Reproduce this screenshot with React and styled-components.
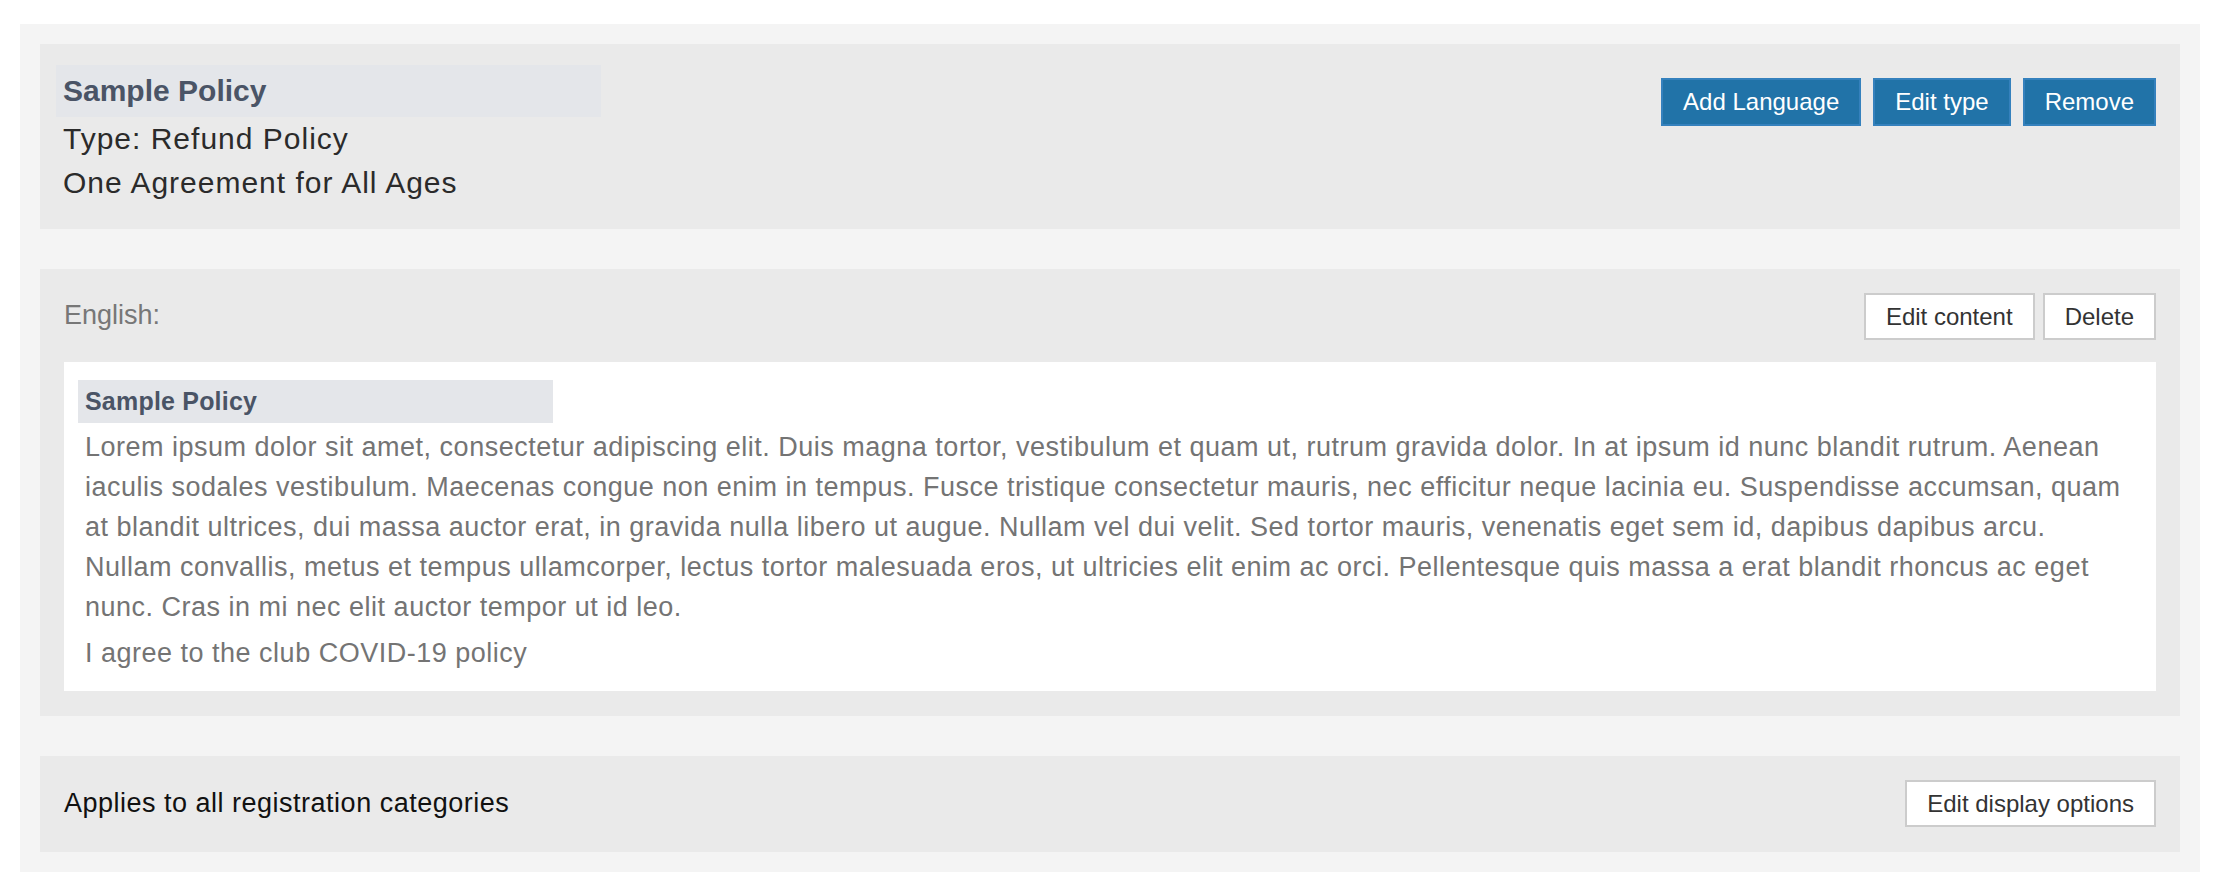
import React from "react";
import styled, { createGlobalStyle } from "styled-components";

const GlobalStyle = createGlobalStyle`
  html, body {
    margin: 0;
    padding: 0;
    background: #ffffff;
    font-family: "Liberation Sans", Arial, Helvetica, sans-serif;
  }
  * {
    box-sizing: border-box;
  }
`;

const Page = styled.div`
  margin: 24px 28px 18px 20px;
  padding: 20px;
  background: #f4f4f4;
  display: flex;
  flex-direction: column;
  gap: 40px;
`;

const Panel = styled.section`
  background: #eaeaea;
  padding: ${(p) => p.$pad || "24px"};
`;

const HeaderRow = styled.div`
  display: flex;
  justify-content: space-between;
  align-items: ${(p) => p.$align || "center"};
`;

const PolicyInfo = styled.div`
  display: flex;
  flex-direction: column;
`;

const TitleBar = styled.div`
  width: ${(p) => p.$width}px;
  height: ${(p) => p.$height}px;
  line-height: ${(p) => p.$height}px;
  margin: ${(p) => p.$margin || "0"};
  padding: 0 7px;
  background: #e4e6ea;
  color: #4a5466;
  font-weight: bold;
  font-size: ${(p) => p.$size}px;
  letter-spacing: ${(p) => p.$spacing || 0}px;
`;

const InfoLine = styled.div`
  padding-left: 7px;
  font-size: 30px;
  line-height: 44px;
  letter-spacing: 1px;
  color: #2b2b2b;
`;

const ButtonGroup = styled.div`
  display: flex;
  gap: ${(p) => p.$gap || 12}px;
  margin-top: ${(p) => p.$offset || 0}px;
`;

const PrimaryButton = styled.button`
  height: 48px;
  padding: 0 20px;
  border: 2px solid #3581bd;
  background: #2173a8;
  color: #ffffff;
  font-family: inherit;
  font-size: 24px;
  cursor: pointer;
`;

const SecondaryButton = styled.button`
  height: 47px;
  padding: 0 20px;
  border: 2px solid #cccccc;
  background: #ffffff;
  color: #333333;
  font-family: inherit;
  font-size: 24px;
  cursor: pointer;
`;

const LanguageLabel = styled.span`
  font-size: 27px;
  color: #777777;
  margin-top: -3px;
`;

const ContentCard = styled.div`
  margin-top: 22px;
  padding: 18px 20px 18px 21px;
  background: #ffffff;
`;

const BodyText = styled.p`
  margin: ${(p) => p.$margin || "0"};
  font-size: 27px;
  line-height: 40px;
  letter-spacing: 0.5px;
  color: #747474;
`;

const CategoryText = styled.span`
  font-size: 27px;
  letter-spacing: 0.5px;
  color: #111111;
`;

const lorem =
  "Lorem ipsum dolor sit amet, consectetur adipiscing elit. Duis magna tortor, vestibulum et quam ut, rutrum gravida dolor. In at ipsum id nunc blandit rutrum. Aenean iaculis sodales vestibulum. Maecenas congue non enim in tempus. Fusce tristique consectetur mauris, nec efficitur neque lacinia eu. Suspendisse accumsan, quam at blandit ultrices, dui massa auctor erat, in gravida nulla libero ut augue. Nullam vel dui velit. Sed tortor mauris, venenatis eget sem id, dapibus dapibus arcu. Nullam convallis, metus et tempus ullamcorper, lectus tortor malesuada eros, ut ultricies elit enim ac orci. Pellentesque quis massa a erat blandit rhoncus ac eget nunc. Cras in mi nec elit auctor tempor ut id leo.";

const App = () => {
  return (
    <>
      <GlobalStyle />
      <Page>
        <Panel $pad="21px 24px 24px 16px">
          <HeaderRow $align="flex-start">
            <PolicyInfo>
              <TitleBar $width={545} $height={52} $size={30}>
                Sample Policy
              </TitleBar>
              <InfoLine>Type: Refund Policy</InfoLine>
              <InfoLine>One Agreement for All Ages</InfoLine>
            </PolicyInfo>
            <ButtonGroup $offset={13}>
              <PrimaryButton>Add Language</PrimaryButton>
              <PrimaryButton>Edit type</PrimaryButton>
              <PrimaryButton>Remove</PrimaryButton>
            </ButtonGroup>
          </HeaderRow>
        </Panel>

        <Panel $pad="24px 24px 25px 24px">
          <HeaderRow>
            <LanguageLabel>English:</LanguageLabel>
            <ButtonGroup $gap={8}>
              <SecondaryButton>Edit content</SecondaryButton>
              <SecondaryButton>Delete</SecondaryButton>
            </ButtonGroup>
          </HeaderRow>
          <ContentCard>
            <TitleBar
              $width={475}
              $height={43}
              $size={25}
              $spacing={0.2}
              $margin="0 -7px"
            >
              Sample Policy
            </TitleBar>
            <BodyText $margin="4px 0 0">{lorem}</BodyText>
            <BodyText $margin="6px 0 0">I agree to the club COVID-19 policy</BodyText>
          </ContentCard>
        </Panel>

        <Panel $pad="24px 24px 25px 24px">
          <HeaderRow>
            <CategoryText>Applies to all registration categories</CategoryText>
            <SecondaryButton>Edit display options</SecondaryButton>
          </HeaderRow>
        </Panel>
      </Page>
    </>
  );
};

export default App;
